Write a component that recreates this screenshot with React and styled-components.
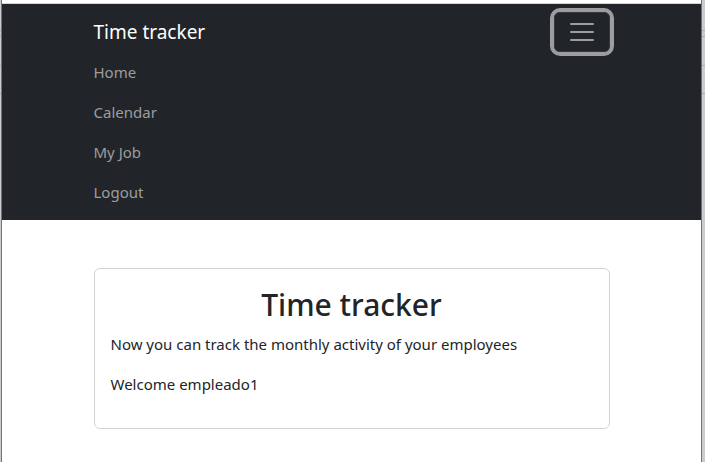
import React, { useState } from "react";
import styled, { createGlobalStyle } from "styled-components";

const GlobalStyle = createGlobalStyle`
  *, *::before, *::after { box-sizing: border-box; }
  html { background: #ffffff; }
  body {
    margin: 0;
    color: #212529;
    font-family: "Segoe UI", "Noto Sans", "Open Sans", sans-serif;
    font-size: 15px;
    line-height: 24px;
  }
`;

const Screen = styled.div`
  display: grid;
  grid-template-columns: 1px minmax(0, 1fr) 3px;
  min-height: 100vh;
`;

const Edge = styled.div`
  background:
    linear-gradient(#a9a9a9, #a9a9a9) 0 30px / 100% 1px no-repeat,
    linear-gradient(#a9a9a9, #a9a9a9) 0 36px / 100% 1px no-repeat,
    linear-gradient(#a9a9a9, #a9a9a9) 0 65px / 100% 1px no-repeat,
    linear-gradient(#a9a9a9, #a9a9a9) 0 93px / 100% 1px no-repeat,
    #cbcbcb;
`;

const Page = styled.div`
  border: solid #737373;
  border-width: 0 1px;
`;

const TopStrip = styled.div`
  height: 4px;
  background: #ffffff;
  border-bottom: 1px solid #d3d3d3;
`;

const Container = styled.div`
  width: 100%;
  max-width: 540px;
  margin: 0 auto;
  padding: 0 12px;
`;

const Navbar = styled.nav`
  padding: 8px 0;
  background: #212529;
`;

const NavHeader = styled.div`
  display: flex;
  align-items: center;
  justify-content: space-between;
`;

const Brand = styled.a`
  color: #ffffff;
  font-size: 19px;
  line-height: 30px;
  text-decoration: none;
`;

const Toggler = styled.button`
  display: flex;
  align-items: center;
  justify-content: center;
  width: 56px;
  height: 40px;
  padding: 0;
  color: #9b9d9e;
  background: transparent;
  border: 1px solid #35393d;
  border-radius: 6px;
  box-shadow: 0 0 0 4px #9b9d9e;
  outline: none;
  cursor: pointer;
`;

const NavList = styled.ul`
  margin: 0;
  padding: 0;
  list-style: none;
`;

const NavLink = styled.a`
  display: block;
  padding: 8px 0;
  color: #9b9d9e;
  text-decoration: none;
`;

const Card = styled.section`
  margin: 48px 0;
  padding: 16px;
  border: 1px solid #d3d3d4;
  border-radius: 6px;
`;

const Title = styled.h1`
  margin: 0 0 8px;
  font-size: 30px;
  font-weight: 500;
  line-height: 39px;
  text-align: center;
`;

const Text = styled.p`
  margin: 0 0 16px;
`;

const links = ["Home", "Calendar", "My Job", "Logout"];

export default function App() {
  const [open, setOpen] = useState(true);
  return (
    <>
      <GlobalStyle />
      <Screen>
        <Edge />
        <Page>
          <TopStrip />
          <Navbar>
            <Container>
              <NavHeader>
                <Brand href="#">Time tracker</Brand>
                <Toggler
                  type="button"
                  aria-label="Toggle navigation"
                  aria-expanded={open}
                  onClick={() => setOpen(!open)}
                >
                  <svg width="24" height="18" viewBox="0 0 24 18" aria-hidden="true">
                    <path
                      d="M1 1h22M1 9h22M1 17h22"
                      stroke="currentColor"
                      strokeWidth="2"
                      strokeLinecap="round"
                    />
                  </svg>
                </Toggler>
              </NavHeader>
              {open && (
                <NavList>
                  {links.map((label) => (
                    <li key={label}>
                      <NavLink href="#">{label}</NavLink>
                    </li>
                  ))}
                </NavList>
              )}
            </Container>
          </Navbar>
          <Container as="main">
            <Card>
              <Title>Time tracker</Title>
              <Text>Now you can track the monthly activity of your employees</Text>
              <Text>Welcome empleado1</Text>
            </Card>
          </Container>
        </Page>
        <Edge />
      </Screen>
    </>
  );
}
